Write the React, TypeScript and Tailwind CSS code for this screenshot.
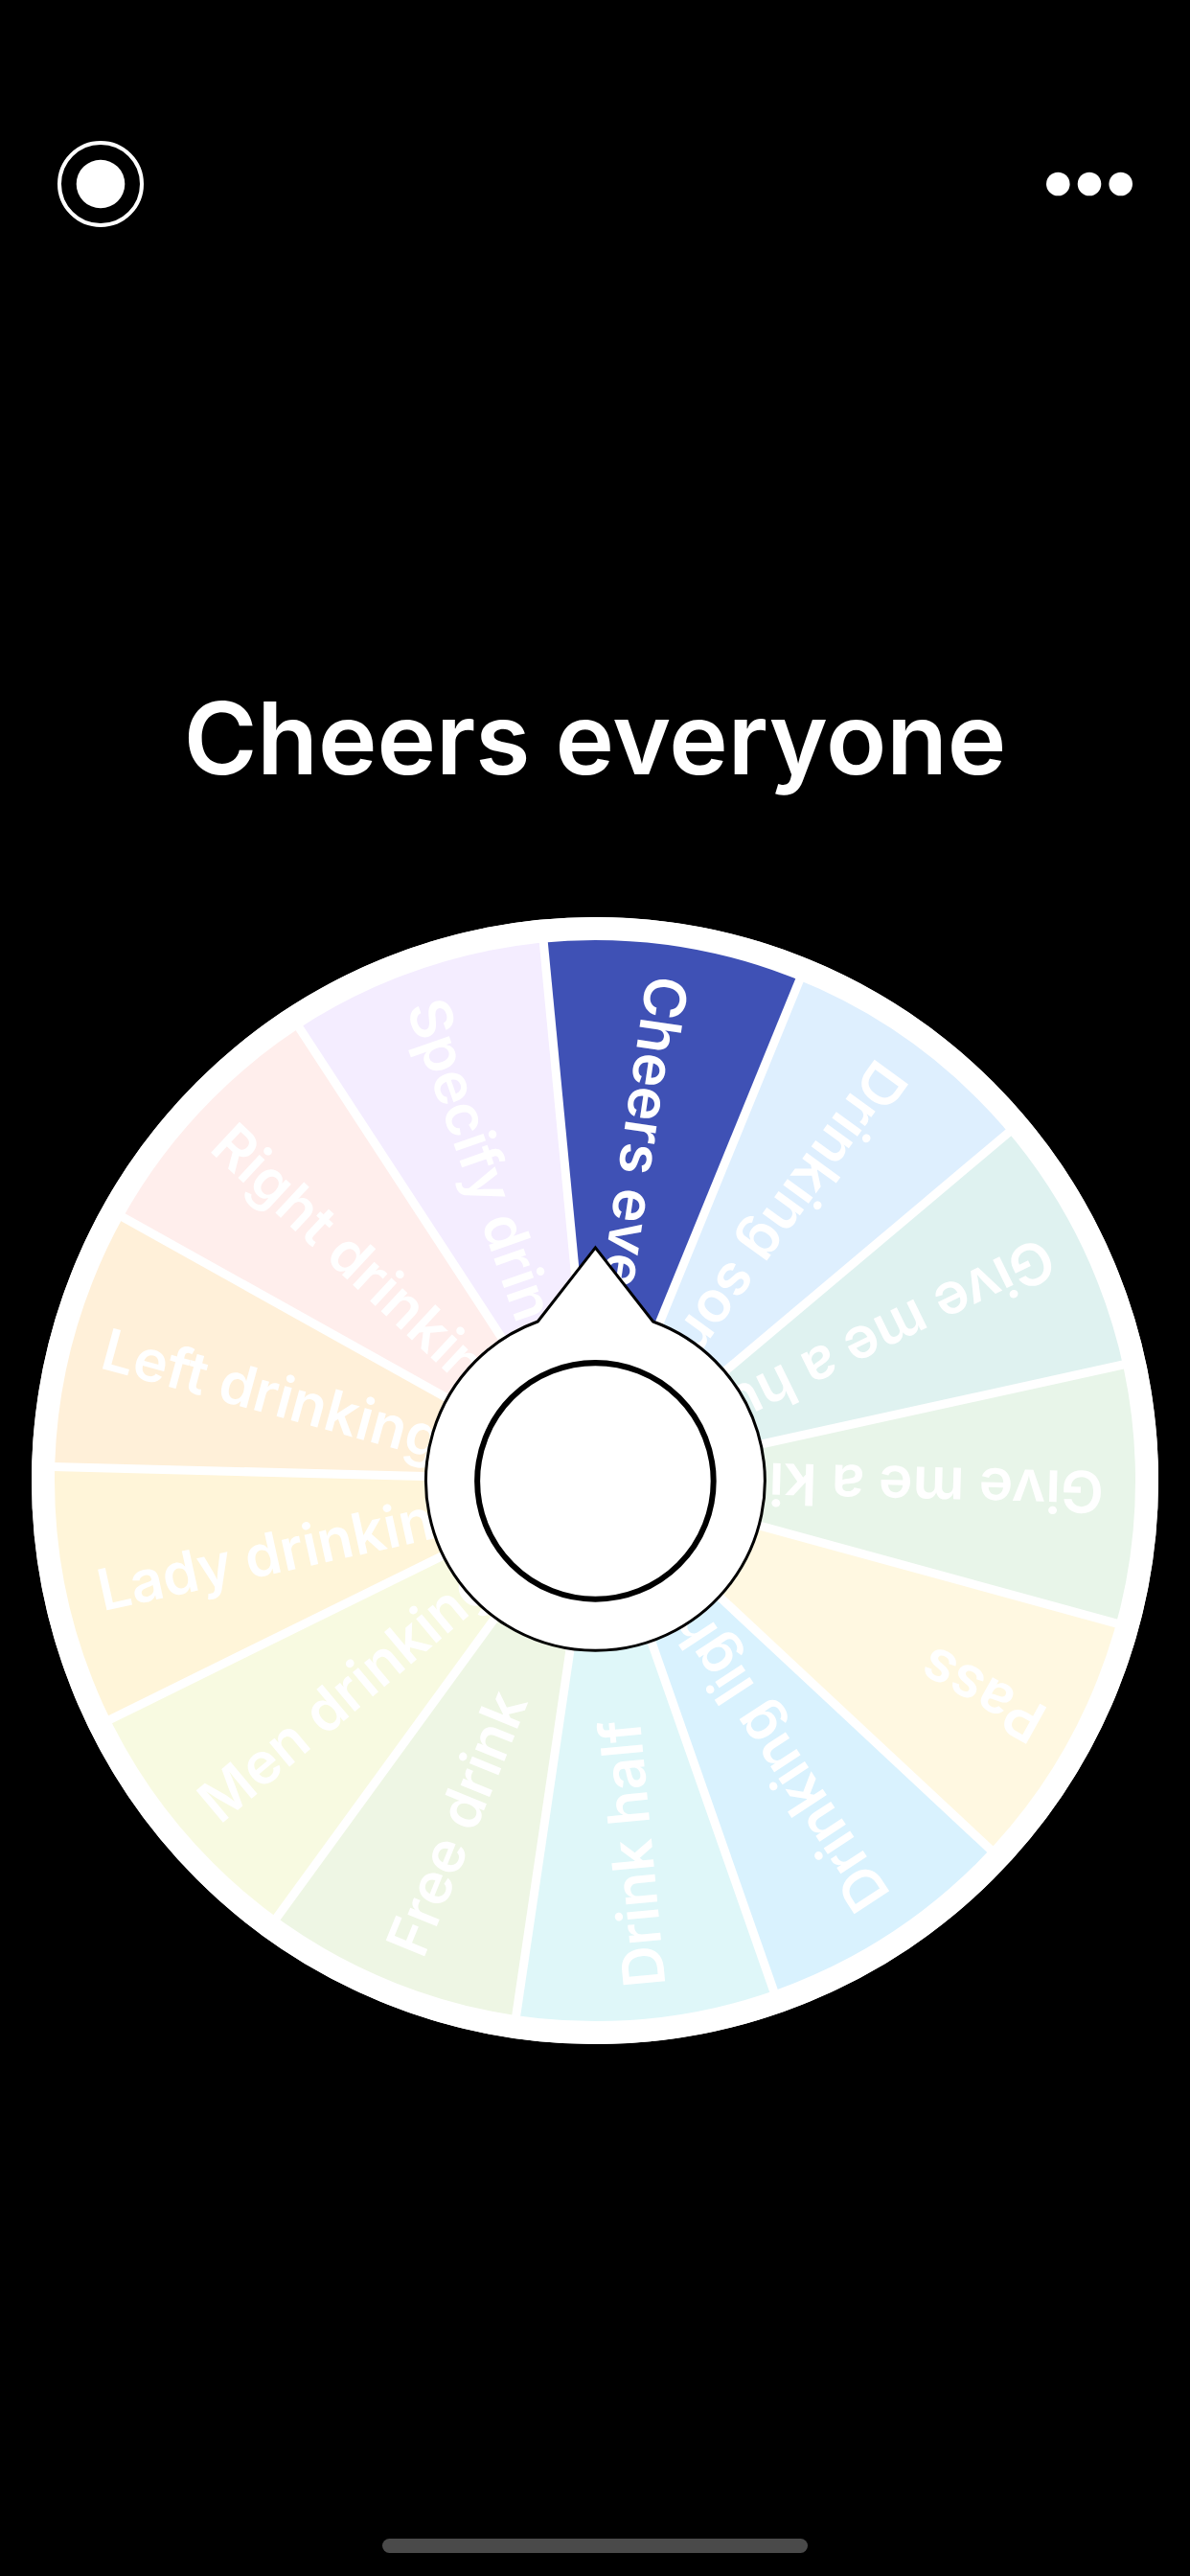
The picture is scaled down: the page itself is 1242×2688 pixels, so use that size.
type Slice = { label: string; color: string };

const slices: Slice[] = [
  { label: "Cheers everyone", color: "#3f51b5" },
  { label: "Drinking song", color: "#deeffe" },
  { label: "Give me a hug", color: "#dff2f0" },
  { label: "Give me a kiss", color: "#e8f5e9" },
  { label: "Pass", color: "#fff8e1" },
  { label: "Drinking light", color: "#d9f2fe" },
  { label: "Drink half", color: "#dff7f9" },
  { label: "Free drink", color: "#eef6e4" },
  { label: "Men drinking", color: "#f8fae1" },
  { label: "Lady drinking", color: "#fff5d9" },
  { label: "Left drinking", color: "#fff0d9" },
  { label: "Right drinking", color: "#ffeeec" },
  { label: "Specify drinking", color: "#f4edff" },
];

const STEP = 360 / slices.length;
const START = -5.46;
const RADIUS = 576;

function pointAt(degrees: number, radius: number) {
  const a = (degrees * Math.PI) / 180;
  return `${(radius * Math.sin(a)).toFixed(2)} ${(-radius * Math.cos(a)).toFixed(2)}`;
}

function Wheel() {
  return (
    <svg viewBox="-588 -588 1176 1176" className="block w-full" role="img" aria-label="Wheel of choices">
      <circle r="588" fill="#fff" />
      {slices.map((s, i) => {
        const from = START + i * STEP;
        return (
          <path
            key={s.label}
            d={`M0 0L${pointAt(from, RADIUS)}A${RADIUS} ${RADIUS} 0 0 1 ${pointAt(from + STEP, RADIUS)}Z`}
            fill={s.color}
          />
        );
      })}
      {slices.map((s, i) => (
        <path key={s.label} d={`M0 0L${pointAt(START + i * STEP, RADIUS)}`} stroke="#fff" strokeWidth="9" />
      ))}
      <circle r={RADIUS} fill="none" stroke="#fff" strokeWidth="24" />
      {slices.map((s, i) => (
        <text
          key={s.label}
          x="-531"
          y="23"
          fill="#fff"
          transform={`rotate(${(START + (i + 0.5) * STEP + 90).toFixed(2)})`}
          className="text-[60px] font-semibold"
        >
          {s.label}
        </text>
      ))}
    </svg>
  );
}

function SpinButton() {
  return (
    <button type="button" aria-label="Spin" className="absolute inset-0 m-auto aspect-square w-[30%] rounded-full">
      <svg viewBox="-176 -176 352 352" className="block w-full overflow-visible">
        <path d="M-60 -166L0 -243L60 -166A176.5 176.5 0 1 1 -60 -166Z" fill="#fff" stroke="#000" strokeWidth="3" />
        <circle r="123" fill="#fff" stroke="#000" strokeWidth="6" />
      </svg>
    </button>
  );
}

export default function App() {
  return (
    <main className="flex min-h-screen flex-col bg-black font-['Inter','Liberation_Sans',sans-serif] text-white">
      <header className="flex items-center justify-between px-[60px] pt-[147px]">
        <button type="button" aria-label="Record">
          <svg viewBox="0 0 90 90" className="block size-[90px]">
            <circle cx="45" cy="45" r="43" fill="none" stroke="#fff" strokeWidth="4" />
            <circle cx="45" cy="45" r="25.3" fill="#fff" />
          </svg>
        </button>
        <button type="button" aria-label="More">
          <svg viewBox="0 0 90 90" className="block size-[90px]" fill="#fff">
            <circle cx="12.3" cy="45" r="12.3" />
            <circle cx="45" cy="45" r="12.3" />
            <circle cx="77.7" cy="45" r="12.3" />
          </svg>
        </button>
      </header>

      <h1 className="mt-[465px] text-center text-[104px] leading-[136px] font-semibold">Cheers everyone</h1>

      <div className="relative mx-[33px] mt-[119px]">
        <Wheel />
        <SpinButton />
      </div>

      <footer className="mt-auto flex justify-center pb-6">
        <div className="h-[15px] w-[444px] rounded-full bg-[#4a4a4a]" />
      </footer>
    </main>
  );
}
